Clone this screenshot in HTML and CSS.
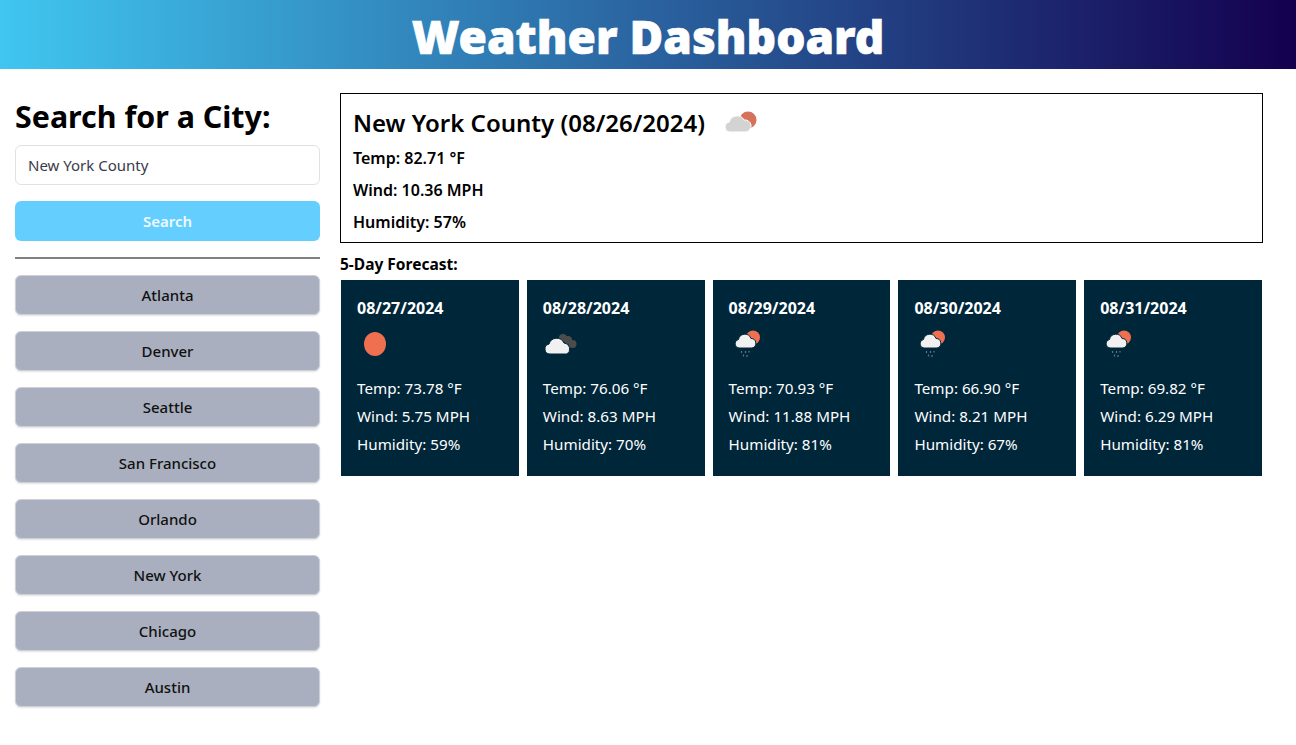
FILE: index.html
```html
<!DOCTYPE html>
<html lang="en">

<head>
    <meta charset="UTF-8">
    <meta name="viewport" content="width=device-width, initial-scale=1.0">
    <title>Weather Dashboard</title>

    <link rel="stylesheet" href="styles.css">
</head>

<body>
    <header class="banner">
        <h1>Weather Dashboard</h1>
    </header>

    <div class="layout">
        <aside class="sidebar">
            <h2>Search for a City:</h2>
            <input class="city-input" type="text" value="New York County">
            <button class="search-btn">Search</button>
            <hr>
            <button class="city-btn">Atlanta</button>
            <button class="city-btn">Denver</button>
            <button class="city-btn">Seattle</button>
            <button class="city-btn">San Francisco</button>
            <button class="city-btn">Orlando</button>
            <button class="city-btn">New York</button>
            <button class="city-btn">Chicago</button>
            <button class="city-btn">Austin</button>
        </aside>

        <main class="content">
            <section class="today">
                <div class="today-title">
                    <h2>New York County (08/26/2024)</h2>
                    <svg class="day-icon today-icon" viewBox="0 0 36 36">
                        <circle cx="27" cy="15" r="8.500" fill="#d4725a" />
                        <path d="M9 27a5 5 0 0 1-.8-9.900A8 8 0 0 1 23 15a6 6 0 0 1 2 12z" fill="#d3d3d3" stroke="#fff" />
                    </svg>
                </div>
                <p>Temp: 82.71 °F</p>
                <p>Wind: 10.36 MPH</p>
                <p>Humidity: 57%</p>
            </section>

            <h3 class="forecast-title">5-Day Forecast:</h3>
            <div class="forecast">
                <article class="day">
                    <h4>08/27/2024</h4>
                    <svg class="day-icon" viewBox="0 0 36 36">
                        <ellipse cx="18" cy="18" rx="11" ry="12" fill="#ee7050" />
                    </svg>
                    <p>Temp: 73.78 °F</p>
                    <p>Wind: 5.75 MPH</p>
                    <p>Humidity: 59%</p>
                </article>
                <article class="day">
                    <h4>08/28/2024</h4>
                    <svg class="day-icon" viewBox="0 0 36 36">
                        <circle cx="20" cy="12" r="4" fill="#4c4c4c" />
                        <circle cx="25" cy="14" r="4" fill="#4c4c4c" />
                        <circle cx="29.500" cy="18" r="4" fill="#4c4c4c" />
                        <path d="M7 28a5 5 0 0 1-1-9.900A8 8 0 0 1 21 17a6 6 0 0 1 3 11z" fill="#f1f1f1" stroke="#00263a" />
                    </svg>
                    <p>Temp: 76.06 °F</p>
                    <p>Wind: 8.63 MPH</p>
                    <p>Humidity: 70%</p>
                </article>
                <article class="day">
                    <h4>08/29/2024</h4>
                    <svg class="day-icon" viewBox="0 0 36 36">
                        <circle cx="24" cy="11.500" r="7" fill="#ee7050" />
                        <path d="M10 22a4.300 4.300 0 0 1-.5-8.500A6.500 6.500 0 0 1 22 12.500a4.800 4.800 0 0 1 1 9.500z" fill="#f1f1f1" stroke="#00263a" />
                        <path class="rain" d="M12.500 25v2M16.500 25v2M20 25v1.500M14.500 28.500v2M18 29v2" />
                    </svg>
                    <p>Temp: 70.93 °F</p>
                    <p>Wind: 11.88 MPH</p>
                    <p>Humidity: 81%</p>
                </article>
                <article class="day">
                    <h4>08/30/2024</h4>
                    <svg class="day-icon" viewBox="0 0 36 36">
                        <circle cx="24" cy="11.500" r="7" fill="#ee7050" />
                        <path d="M10 22a4.300 4.300 0 0 1-.5-8.500A6.500 6.500 0 0 1 22 12.500a4.800 4.800 0 0 1 1 9.500z" fill="#f1f1f1" stroke="#00263a" />
                        <path class="rain" d="M12.500 25v2M16.500 25v2M20 25v1.500M14.500 28.500v2M18 29v2" />
                    </svg>
                    <p>Temp: 66.90 °F</p>
                    <p>Wind: 8.21 MPH</p>
                    <p>Humidity: 67%</p>
                </article>
                <article class="day">
                    <h4>08/31/2024</h4>
                    <svg class="day-icon" viewBox="0 0 36 36">
                        <circle cx="24" cy="11.500" r="7" fill="#ee7050" />
                        <path d="M10 22a4.300 4.300 0 0 1-.5-8.500A6.500 6.500 0 0 1 22 12.500a4.800 4.800 0 0 1 1 9.500z" fill="#f1f1f1" stroke="#00263a" />
                        <path class="rain" d="M12.500 25v2M16.500 25v2M20 25v1.500M14.500 28.500v2M18 29v2" />
                    </svg>
                    <p>Temp: 69.82 °F</p>
                    <p>Wind: 6.29 MPH</p>
                    <p>Humidity: 81%</p>
                </article>
            </div>
        </main>
    </div>
</body>

</html>
```

FILE: styles.css
```css
* {
    box-sizing: border-box;
}

body {
    margin: 0;
    font-family: 'Noto Sans', sans-serif;
    color: #000;
    background: #fff;
}

.banner {
    height: 69px;
    background: linear-gradient(to right, #40c6f0, #14004f);
    text-align: center;
}

.banner h1 {
    margin: 0;
    font-size: 46px;
    line-height: 73px;
    font-weight: 900;
    color: #fff;
    -webkit-text-stroke: .7px #fff;
}

.layout {
    display: flex;
    gap: 20px;
    padding: 24px 33px 0 15px;
}

.sidebar {
    flex: 0 0 305px;
    display: flex;
    flex-direction: column;
}

.sidebar h2 {
    margin: 0 0 4px;
    font-size: 30.400px;
    line-height: 48px;
    font-weight: 700;
}

.city-input {
    height: 40px;
    padding: 0 12px;
    font: inherit;
    font-size: 15px;
    color: #3a3a4a;
    border: 1px solid #dee2e6;
    border-radius: 6px;
}

.search-btn,
.city-btn {
    height: 40px;
    font: inherit;
    font-size: 15px;
    border-radius: 6px;
}

.search-btn {
    margin-top: 16px;
    font-weight: 600;
    color: #eef9ff;
    background: #64ceff;
    border: 0;
}

.sidebar hr {
    width: 100%;
    margin: 16px 0;
    border: 0;
    border-top: 2px solid #808080;
}

.city-btn {
    margin-bottom: 16px;
    font-weight: 500;
    color: #111;
    background: #a9afbe;
    border: 1px solid #ccd0d8;
    box-shadow: 0 1px 2px rgba(0, 0, 0, .12);
}

.content {
    flex: 1;
}

.today {
    height: 150px;
    padding: 10px 12px 0;
    border: 1px solid #000;
}

.today-title {
    display: flex;
    align-items: center;
    gap: 16px;
}

.today-title h2 {
    margin: 0;
    font-size: 24px;
    line-height: 38px;
    font-weight: 600;
}

.today p {
    margin: 0;
    font-size: 16px;
    line-height: 32px;
    font-weight: 600;
}

.forecast-title {
    margin: 10px 0 5px;
    font-size: 15.500px;
    line-height: 22px;
    font-weight: 700;
}

.forecast {
    display: flex;
    gap: 8px;
    padding: 0 1px;
}

.day {
    flex: 1;
    height: 196px;
    padding: 16px;
    color: #fff;
    background: #00263a;
}

.day h4 {
    margin: 0;
    font-size: 16px;
    line-height: 24px;
    font-weight: 700;
}

.day-icon {
    display: block;
    width: 36px;
    height: 36px;
    margin: 6px 0 12px;
}

.today-icon {
    margin: 0;
}

.rain {
    stroke: #667480;
    stroke-width: 1.200;
}

.day p {
    margin: 0;
    font-size: 15.200px;
    line-height: 28px;
}
```
